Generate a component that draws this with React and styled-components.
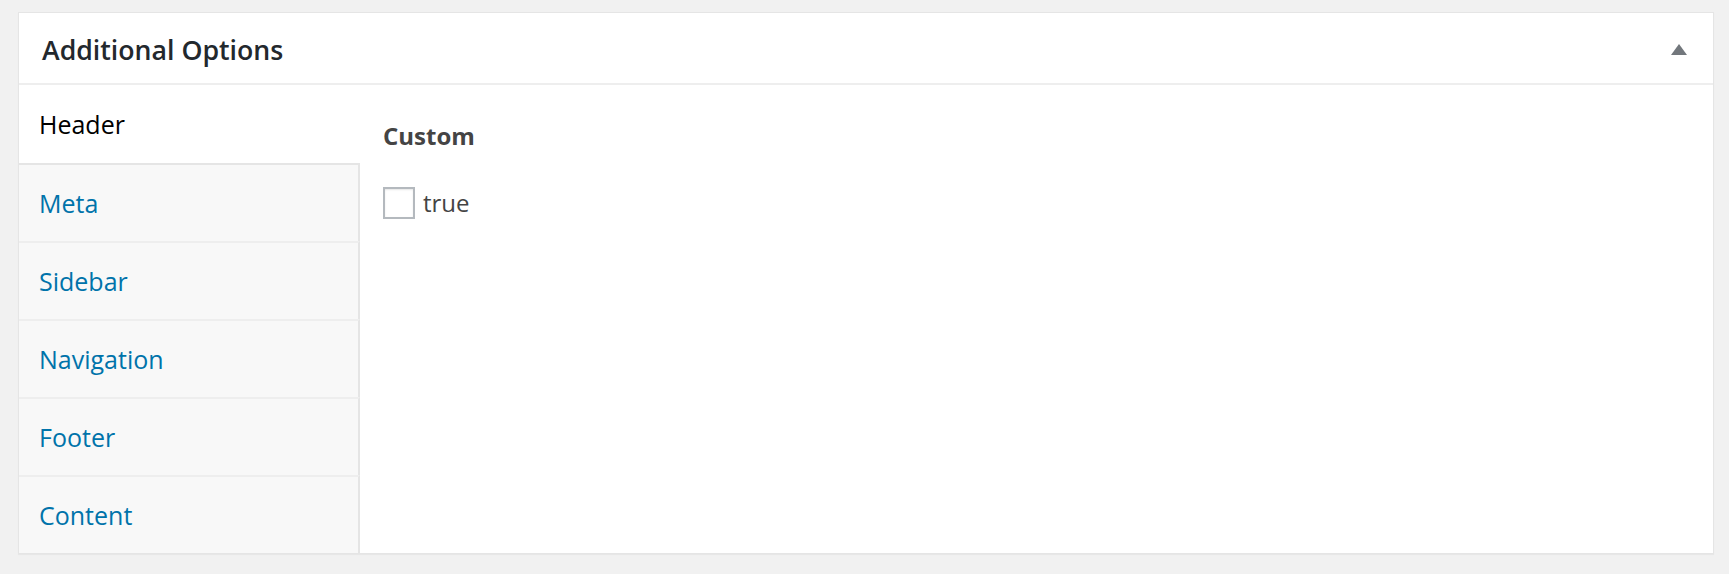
import React, { useState } from 'react';
import styled, { createGlobalStyle } from 'styled-components';

const GlobalStyle = createGlobalStyle`
    * {
        box-sizing: border-box;
    }
    body {
        margin: 0;
        background: #f1f1f1;
        font-family: "Open Sans", "Noto Sans", sans-serif;
    }
`;

const tabs = ['Header', 'Meta', 'Sidebar', 'Navigation', 'Footer', 'Content'];

export default function App() {
    const [active, setActive] = useState('Header');
    const [checked, setChecked] = useState(false);

    return (
        <>
            <GlobalStyle />
            <Page>
                <Postbox>
                    <BoxHeader>
                        <Title>Additional Options</Title>
                        <Toggle aria-label="Toggle panel">
                            <svg width="16" height="11" viewBox="0 0 16 11">
                                <polygon points="8,0 16,11 0,11" fill="#72777c" />
                            </svg>
                        </Toggle>
                    </BoxHeader>
                    <Body>
                        <TabList>
                            {tabs.map((t) => (
                                <Tab key={t} $active={t === active} onClick={() => setActive(t)}>
                                    {t}
                                </Tab>
                            ))}
                        </TabList>
                        <Panel>
                            <FieldLabel>Custom</FieldLabel>
                            <CheckRow>
                                <Check
                                    type="checkbox"
                                    checked={checked}
                                    onChange={(e) => setChecked(e.target.checked)}
                                />
                                true
                            </CheckRow>
                        </Panel>
                    </Body>
                </Postbox>
            </Page>
        </>
    );
}

const Page = styled.div`
    padding: 12px 15px 20px 18px;
`;

const Postbox = styled.div`
    background: #fff;
    border: 1px solid #e5e5e5;
    box-shadow: 0 1px 1px rgba(0, 0, 0, 0.04);
`;

const BoxHeader = styled.div`
    height: 72px;
    display: flex;
    align-items: center;
    justify-content: space-between;
    padding: 3px 26px 0 23px;
    border-bottom: 2px solid #eee;
`;

const Title = styled.h2`
    margin: 0;
    font-size: 26.7px;
    font-weight: 600;
    color: #23282d;
`;

const Toggle = styled.button`
    border: 0;
    background: none;
    padding: 0;
    display: flex;
    cursor: pointer;
`;

const Body = styled.div`
    display: flex;
`;

const TabList = styled.div`
    width: 341px;
    flex-shrink: 0;
    display: flex;
    flex-direction: column;
`;

const Tab = styled.div`
    height: 78px;
    display: flex;
    align-items: center;
    padding-left: 20px;
    font-size: 25px;
    cursor: pointer;
    background: ${(p) => (p.$active ? '#fff' : '#f8f8f8')};
    color: ${(p) => (p.$active ? '#000' : '#0073aa')};
    border-top: 2px solid ${(p) => (p.$active ? 'transparent' : '#eee')};
    border-right: 2px solid ${(p) => (p.$active ? 'transparent' : '#e5e5e5')};

    &:first-child {
        border-top: 0;
    }
    &:nth-child(2) {
        border-top-color: #e5e5e5;
    }
`;

const Panel = styled.div`
    flex: 1;
    padding: 34px 23px;
`;

const FieldLabel = styled.div`
    font-size: 24px;
    font-weight: 700;
    color: #444;
`;

const CheckRow = styled.label`
    display: flex;
    align-items: center;
    gap: 8px;
    margin-top: 34px;
    font-size: 24px;
    color: #444;
`;

const Check = styled.input`
    appearance: none;
    margin: 0;
    width: 32px;
    height: 32px;
    border: 2px solid #b4b9be;
    background: #fff;
    box-shadow: inset 0 1px 2px rgba(0, 0, 0, 0.1);
`;
